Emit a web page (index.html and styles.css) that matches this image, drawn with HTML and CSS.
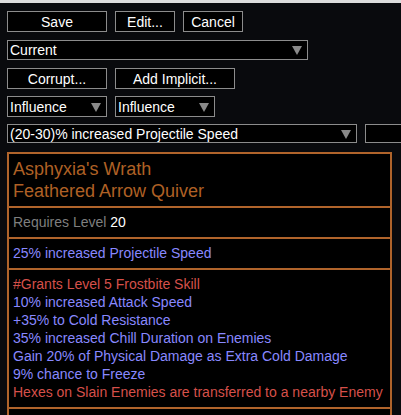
FILE: index.html
```html
<!DOCTYPE html>
<html>

<head>
    <meta name="viewport" content="width=device-width, initial-scale=1"/>
    <link rel="stylesheet" href="styles.css">
</head>

<body>
    <div class="topbar"></div>
    <div class="editor">
        <div class="row row-actions">
            <span class="btn btn-wide">Save</span>
            <span class="btn btn-small">Edit...</span>
            <span class="btn btn-small">Cancel</span>
        </div>
        <div class="row row-base">
            <div class="select select-base">Current<i class="arrow"></i></div>
        </div>
        <div class="row row-mods">
            <span class="btn btn-wide">Corrupt...</span>
            <span class="btn btn-implicit">Add Implicit...</span>
        </div>
        <div class="row row-influence">
            <div class="select select-influence">Influence<i class="arrow"></i></div>
            <div class="select select-influence">Influence<i class="arrow"></i></div>
        </div>
        <div class="row row-affix">
            <div class="select select-affix">(20-30)% increased Projectile Speed<i class="arrow"></i></div>
            <div class="value-input"></div>
        </div>

        <div class="item">
            <div class="item-section item-name">
                <div>Asphyxia's Wrath</div>
                <div>Feathered Arrow Quiver</div>
            </div>
            <div class="item-section item-req">
                Requires Level <span class="req-value">20</span>
            </div>
            <div class="item-section">
                <div class="mod">25% increased Projectile Speed</div>
            </div>
            <div class="item-section">
                <div class="mod mod-red">#Grants Level 5 Frostbite Skill</div>
                <div class="mod">10% increased Attack Speed</div>
                <div class="mod">+35% to Cold Resistance</div>
                <div class="mod">35% increased Chill Duration on Enemies</div>
                <div class="mod">Gain 20% of Physical Damage as Extra Cold Damage</div>
                <div class="mod">9% chance to Freeze</div>
                <div class="mod mod-red">Hexes on Slain Enemies are transferred to a nearby Enemy</div>
            </div>
            <div class="item-section item-tail"></div>
        </div>
    </div>
</body>

</html>
```

FILE: styles.css
```css
body {
    margin: 0;
    background: #090a0d;
    color: #fff;
    font-family: "Liberation Sans", Arial, sans-serif;
    font-size: 14px;
    overflow: hidden;
}

.topbar {
    height: 3px;
    background: #dcdcdc;
}

.editor {
    padding: 8px 0 0 7px;
    overflow: hidden;
}

.row {
    display: flex;
    gap: 8px;
}

.row > * {
    flex-shrink: 0;
}

.row-actions {
    height: 21px;
    margin-bottom: 8px;
}

.row-base {
    height: 20px;
    margin-bottom: 8px;
}

.row-mods {
    height: 21px;
    margin-bottom: 7px;
}

.row-influence {
    height: 21px;
    margin-bottom: 7px;
}

.row-affix {
    height: 19px;
    margin-bottom: 9px;
}

.btn {
    box-sizing: border-box;
    display: flex;
    align-items: center;
    justify-content: center;
    background: #000;
    border: 1px solid #8c8c8c;
    line-height: 1;
}

.btn-wide {
    width: 100px;
}

.btn-small {
    width: 60px;
}

.btn-implicit {
    width: 120px;
}

.select {
    box-sizing: border-box;
    position: relative;
    display: flex;
    align-items: center;
    padding-left: 2px;
    background: #000;
    border: 1px solid #8c8c8c;
    line-height: 1;
    white-space: nowrap;
}

.select-base {
    width: 301px;
}

.select-influence {
    width: 100px;
}

.select-affix {
    width: 350px;
}

.arrow {
    position: absolute;
    right: 5px;
    top: 50%;
    margin-top: -4px;
    width: 0;
    height: 0;
    border-left: 5px solid transparent;
    border-right: 5px solid transparent;
    border-top: 9px solid #8a8a8a;
}

.value-input {
    box-sizing: border-box;
    width: 60px;
    background: #000;
    border: 1px solid #8c8c8c;
}

.item {
    width: 385px;
    box-sizing: border-box;
    background: #000;
    border: 2px solid #b0642b;
    border-bottom: none;
}

.item-section {
    padding: 5px 4px 6px 4px;
    border-bottom: 2px solid #b0642b;
    line-height: 18px;
    color: #8888ff;
}

.item-name {
    padding: 4px 4px 4px 4px;
    font-size: 18px;
    line-height: 22px;
    color: #af6025;
}

.item-req {
    color: #7f7f7f;
}

.req-value {
    color: #fff;
}

.mod-red {
    color: #d6504a;
}

.item-tail {
    height: 20px;
    padding: 0;
    border-bottom: none;
}
```
